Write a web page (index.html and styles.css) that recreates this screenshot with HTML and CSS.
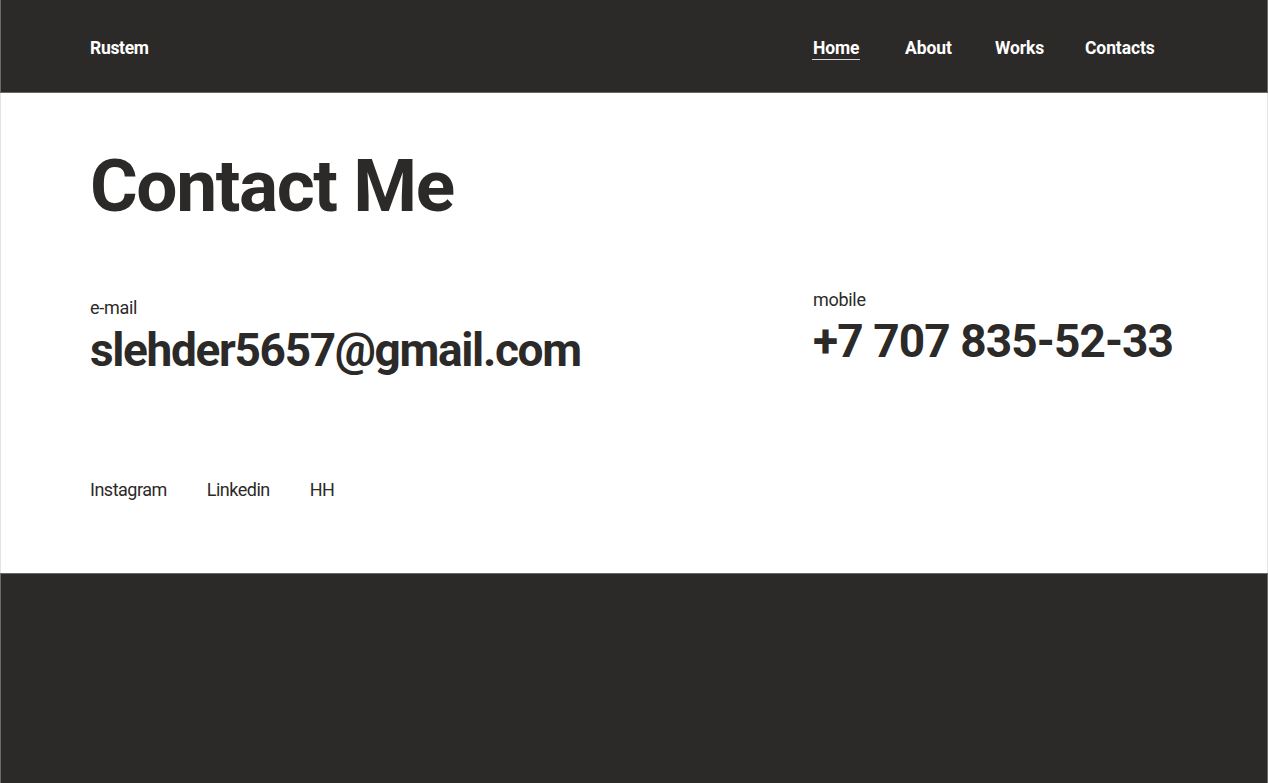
FILE: index.html
```html
<!DOCTYPE html>
<html lang="en">
<head>
<meta charset="utf-8">
<title>Rustem — Contact Me</title>
<link rel="stylesheet" href="styles.css">
</head>
<body>
<header class="site-header">
  <a class="logo" href="#">Rustem</a>
  <nav class="nav">
    <a class="nav-link active" href="#">Home</a>
    <a class="nav-link" href="#">About</a>
    <a class="nav-link" href="#">Works</a>
    <a class="nav-link" href="#">Contacts</a>
  </nav>
</header>
<main class="contact">
  <h1 class="title">Contact Me</h1>
  <div class="details">
    <div class="detail detail-email">
      <div class="label">e-mail</div>
      <div class="value">slehder5657@gmail.com</div>
    </div>
    <div class="detail detail-phone">
      <div class="label">mobile</div>
      <div class="value">+7 707 835-52-33</div>
    </div>
  </div>
  <ul class="socials">
    <li><a href="#">Instagram</a></li>
    <li><a href="#">Linkedin</a></li>
    <li><a href="#">HH</a></li>
  </ul>
</main>
<footer class="site-footer"></footer>
</body>
</html>
```
FILE: styles.css
```css
* { box-sizing: border-box; }
html, body { margin: 0; padding: 0; }
body {
  font-family: Roboto, "Liberation Sans", Arial, sans-serif;
  color: #2c2a28;
  background: #ffffff;
}
a { color: inherit; text-decoration: none; }

.site-header {
  height: 93px;
  background: #2c2a28;
  border: 1px solid #6a6967;
  border-top: 0;
  display: flex;
  justify-content: space-between;
  align-items: flex-start;
  padding: 38px 0 0 89px;
}
.logo {
  color: #ffffff;
  font-weight: 700;
  font-size: 17.5px;
  line-height: 21px;
  letter-spacing: -0.3px;
}
.nav {
  display: grid;
  grid-template-columns: 92px 90px 90px auto;
  width: 455px;
  justify-items: start;
}
.nav-link {
  color: #ffffff;
  font-weight: 700;
  font-size: 17.5px;
  line-height: 21px;
  letter-spacing: -0.1px;
  padding: 0 1px;
  border-bottom: 1px solid transparent;
}
.nav-link.active { border-bottom-color: #d8d8d8; }

.contact {
  border-left: 1px solid #e4e4e4;
  border-right: 1px solid #e4e4e4;
  padding: 57px 0 0 89px;
  height: 480px;
}
.title {
  margin: 0;
  font-size: 73px;
  font-weight: 700;
  line-height: 73px;
  letter-spacing: -1.4px;
}
.details {
  display: grid;
  grid-template-columns: 723px 1fr;
  margin-top: 74px;
}
.label {
  font-size: 18px;
  line-height: 21px;
  letter-spacing: -0.3px;
}
.value {
  font-size: 46px;
  font-weight: 700;
  line-height: 54px;
  margin-top: 5px;
  letter-spacing: -1.35px;
}
.detail-phone { margin-top: -8px; }
.detail-phone .value { letter-spacing: -0.9px; margin-top: 4px; }

.socials {
  list-style: none;
  margin: 102px 0 0;
  padding: 0;
  display: flex;
  gap: 40px;
  font-size: 18px;
  line-height: 21px;
  letter-spacing: -0.5px;
}

.site-footer {
  background: #2c2a28;
  border: 1px solid #6a6967;
  border-bottom: 0;
  height: 230px;
}
```
